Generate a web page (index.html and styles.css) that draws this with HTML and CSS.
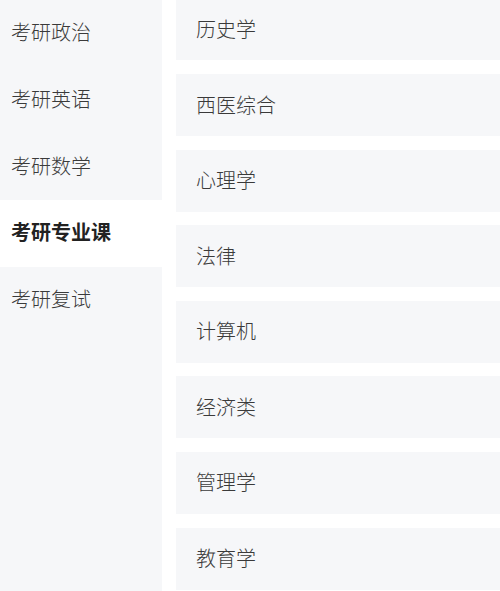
FILE: index.html
```html
<!DOCTYPE html>
<html lang="zh">
<head>
<meta charset="utf-8">
<link rel="stylesheet" href="styles.css">
</head>
<body>
<div class="page">
  <nav class="side">
    <div class="side-item">考研政治</div>
    <div class="side-item">考研英语</div>
    <div class="side-item">考研数学</div>
    <div class="side-item active">考研专业课</div>
    <div class="side-item">考研复试</div>
  </nav>
  <main class="list">
    <div class="card">历史学</div>
    <div class="card">西医综合</div>
    <div class="card">心理学</div>
    <div class="card">法律</div>
    <div class="card">计算机</div>
    <div class="card">经济类</div>
    <div class="card">管理学</div>
    <div class="card">教育学</div>
  </main>
</div>
</body>
</html>
```
FILE: styles.css
```css
* { box-sizing: border-box; }
html, body { margin: 0; padding: 0; background: #fff; }
body {
  width: 500px;
  height: 591px;
  overflow: hidden;
  font-family: "Noto Sans CJK SC", "Noto Sans", sans-serif;
  color: #333;
}
.page {
  display: flex;
  height: 591px;
}
.side {
  width: 162px;
  flex: none;
  background: #f6f7f9;
  display: flex;
  flex-direction: column;
}
.side-item {
  height: 66.7px;
  display: flex;
  align-items: center;
  padding-left: 11px;
  padding-bottom: 3px;
  font-size: 20px;
  font-weight: 300;
  color: #3a3a3a;
}
.side-item.active {
  background: #fff;
  font-weight: 700;
  color: #222;
}
.list {
  flex: 1;
  margin-left: 14px;
  margin-top: -1.6px;
  display: flex;
  flex-direction: column;
  gap: 13.6px;
}
.card {
  height: 62px;
  flex: none;
  background: #f6f7f9;
  display: flex;
  align-items: center;
  padding-left: 20px;
  padding-bottom: 2px;
  font-size: 20px;
  font-weight: 300;
  color: #3a3a3a;
}
```
